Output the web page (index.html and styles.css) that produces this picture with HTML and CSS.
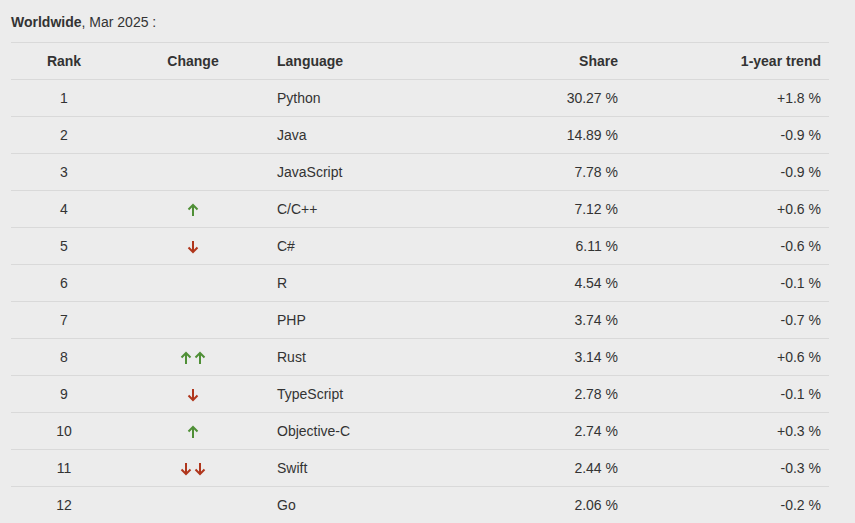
FILE: index.html
```html
<!DOCTYPE html>
<html>
<head>
<meta charset="utf-8">
<link rel="stylesheet" href="styles.css">
</head>
<body>
<div class="page">
  <p class="title"><b>Worldwide</b>, Mar 2025 :</p>
  <table class="rank">
    <colgroup>
      <col class="c-rank"><col class="c-change"><col class="c-lang"><col class="c-share"><col class="c-trend">
    </colgroup>
    <thead>
      <tr><th class="center">Rank</th><th class="center">Change</th><th class="left">Language</th><th class="right">Share</th><th class="right">1-year trend</th></tr>
    </thead>
    <tbody>
      <tr><td class="center">1</td><td class="center"></td><td>Python</td><td class="right">30.27 %</td><td class="right">+1.8 %</td></tr>
      <tr><td class="center">2</td><td class="center"></td><td>Java</td><td class="right">14.89 %</td><td class="right">-0.9 %</td></tr>
      <tr><td class="center">3</td><td class="center"></td><td>JavaScript</td><td class="right">7.78 %</td><td class="right">-0.9 %</td></tr>
      <tr><td class="center">4</td><td class="center"><svg class="arr up" viewBox="0 0 12 14"><path d="M6 13V2M1.5 6.5L6 2l4.5 4.5"/></svg></td><td>C/C++</td><td class="right">7.12 %</td><td class="right">+0.6 %</td></tr>
      <tr><td class="center">5</td><td class="center"><svg class="arr down" viewBox="0 0 12 14"><path d="M6 1v11M1.5 7.5L6 12l4.5-4.5"/></svg></td><td>C#</td><td class="right">6.11 %</td><td class="right">-0.6 %</td></tr>
      <tr><td class="center">6</td><td class="center"></td><td>R</td><td class="right">4.54 %</td><td class="right">-0.1 %</td></tr>
      <tr><td class="center">7</td><td class="center"></td><td>PHP</td><td class="right">3.74 %</td><td class="right">-0.7 %</td></tr>
      <tr><td class="center">8</td><td class="center"><svg class="arr up" viewBox="0 0 12 14"><path d="M6 13V2M1.5 6.5L6 2l4.5 4.5"/></svg><svg class="arr up" viewBox="0 0 12 14"><path d="M6 13V2M1.5 6.5L6 2l4.5 4.5"/></svg></td><td>Rust</td><td class="right">3.14 %</td><td class="right">+0.6 %</td></tr>
      <tr><td class="center">9</td><td class="center"><svg class="arr down" viewBox="0 0 12 14"><path d="M6 1v11M1.5 7.5L6 12l4.5-4.5"/></svg></td><td>TypeScript</td><td class="right">2.78 %</td><td class="right">-0.1 %</td></tr>
      <tr><td class="center">10</td><td class="center"><svg class="arr up" viewBox="0 0 12 14"><path d="M6 13V2M1.5 6.5L6 2l4.5 4.5"/></svg></td><td>Objective-C</td><td class="right">2.74 %</td><td class="right">+0.3 %</td></tr>
      <tr><td class="center">11</td><td class="center"><svg class="arr down" viewBox="0 0 12 14"><path d="M6 1v11M1.5 7.5L6 12l4.5-4.5"/></svg><svg class="arr down" viewBox="0 0 12 14"><path d="M6 1v11M1.5 7.5L6 12l4.5-4.5"/></svg></td><td>Swift</td><td class="right">2.44 %</td><td class="right">-0.3 %</td></tr>
      <tr><td class="center">12</td><td class="center"></td><td>Go</td><td class="right">2.06 %</td><td class="right">-0.2 %</td></tr>
    </tbody>
  </table>
</div>
</body>
</html>
```
FILE: styles.css
```css
html, body {
  margin: 0;
  padding: 0;
  background: #ececec;
}
body {
  font-family: "Liberation Sans", Arial, sans-serif;
  font-size: 14px;
  color: #333;
}
.page {
  padding: 0 26px 0 11px;
}
.title {
  margin: 0;
  height: 42px;
  line-height: 44px;
}
.rank {
  width: 818px;
  border-collapse: collapse;
  table-layout: fixed;
}
.c-rank { width: 106px; }
.c-change { width: 152px; }
.c-lang { width: 200px; }
.c-share { width: 157px; }
.c-trend { width: 203px; }
.rank th, .rank td {
  height: 36px;
  padding: 0 8px;
  border-top: 1px solid #d9d9d9;
  vertical-align: middle;
  text-align: left;
  white-space: nowrap;
}
.rank th {
  font-weight: bold;
}
.rank .center { text-align: center; }
.rank .right { text-align: right; }
.arr {
  width: 12px;
  height: 14px;
  vertical-align: middle;
  margin: 0 1px;
  fill: none;
  stroke-width: 2;
}
.arr.up { stroke: #4f8f36; }
.arr.down { stroke: #b0361c; }
```
